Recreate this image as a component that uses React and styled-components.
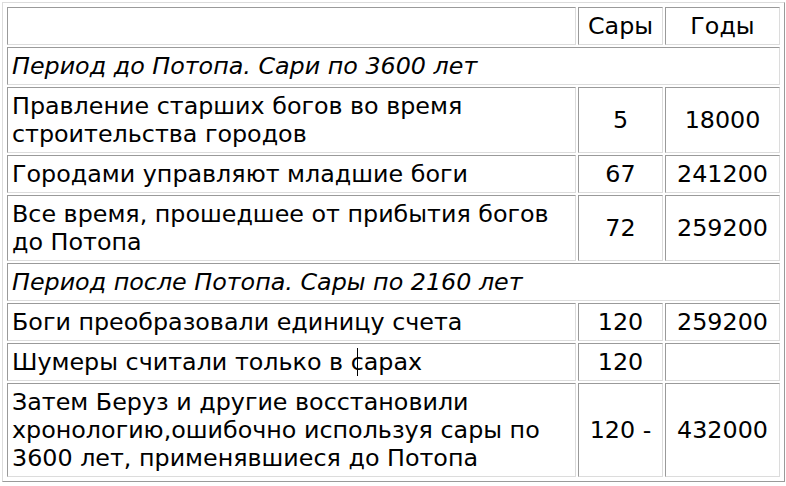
import React from 'react';
import styled, { createGlobalStyle } from 'styled-components';

const GlobalStyle = createGlobalStyle`
  body {
    margin: 0;
    background: #fff;
    font-family: "DejaVu Sans", Verdana, sans-serif;
  }
`;

// old-school border=1 table look
const Table = styled.table`
  margin: 2px;
  width: 779px;
  padding: 2px;
  border-collapse: separate;
  border-spacing: 2px;
  border: 1px solid;
  border-color: #dcdcdc #9a9a9a #9a9a9a #dcdcdc;
  table-layout: fixed;
  font-size: 23.8px;
  line-height: 28px;
  color: #000;
`;

const Cell = styled.td`
  border: 1px solid;
  border-color: #9a9a9a #dcdcdc #dcdcdc #9a9a9a;
  padding: 4px 4px;
  vertical-align: middle;
  text-align: ${props => (props.center ? 'center' : 'left')};
  font-style: ${props => (props.italic ? 'italic' : 'normal')};
  white-space: nowrap;
  overflow: hidden;
`;

const Caret = styled.span`
  position: relative;
  &::before {
    content: '';
    position: absolute;
    left: 6px;
    top: 0px;
    height: 28px;
    border-left: 1px solid #000;
  }
`;

const rows = [
  { type: 'section', text: 'Период до Потопа. Сари по 3600 лет' },
  { lines: ['Правление старших богов во время', 'строительства городов'], sars: '5', years: '18000' },
  { lines: ['Городами управляют младшие боги'], sars: '67', years: '241200' },
  { lines: ['Все время, прошедшее от прибытия богов', 'до Потопа'], sars: '72', years: '259200' },
  { type: 'section', text: 'Период после Потопа. Сары по 2160 лет' },
  { lines: ['Боги преобразовали единицу счета'], sars: '120', years: '259200' },
  { caret: true, sars: '120', years: '' },
  {
    lines: [
      'Затем Беруз и другие восстановили',
      'хронологию,ошибочно используя сары по',
      '3600 лет, применявшиеся до Потопа',
    ],
    sars: '120 -',
    years: '432000',
  },
];

const App = () => {
  return (
    <>
      <GlobalStyle />
      <Table>
        <colgroup>
          <col style={{ width: 569 }} />
          <col style={{ width: 85 }} />
          <col style={{ width: 115 }} />
        </colgroup>
        <tbody>
          <tr>
            <Cell>&nbsp;</Cell>
            <Cell center>Сары</Cell>
            <Cell center>Годы</Cell>
          </tr>
          {rows.map((row, i) =>
            row.type === 'section' ? (
              <tr key={i}>
                <Cell italic colSpan={3}>{row.text}</Cell>
              </tr>
            ) : (
              <tr key={i}>
                <Cell>
                  {row.caret ? (
                    <>Шумеры считали только в <Caret>с</Caret>арах</>
                  ) : (
                    row.lines.map((l, j) => (
                      <React.Fragment key={j}>
                        {j > 0 && <br />}
                        {l}
                      </React.Fragment>
                    ))
                  )}
                </Cell>
                <Cell center>{row.sars}</Cell>
                <Cell center>{row.years || '\u00a0'}</Cell>
              </tr>
            )
          )}
        </tbody>
      </Table>
    </>
  );
};

export default App;
